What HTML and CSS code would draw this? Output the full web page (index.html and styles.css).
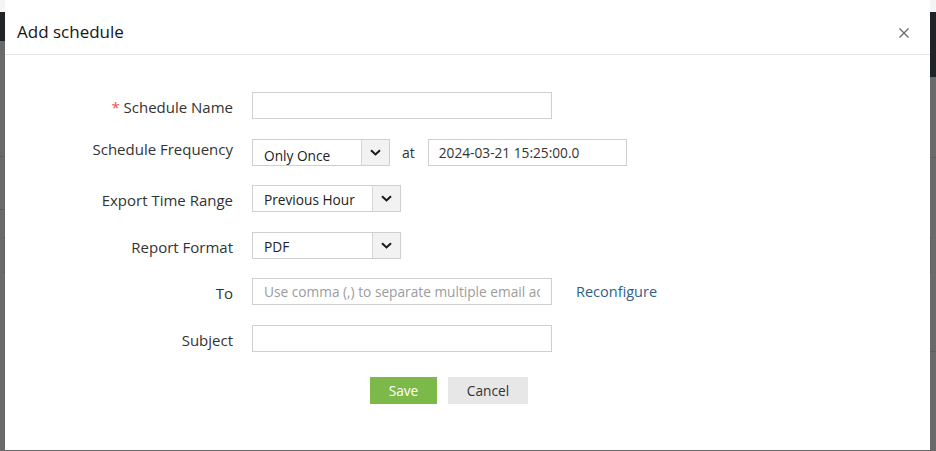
FILE: index.html
```html
<!DOCTYPE html>
<html lang="en">
<head>
<meta charset="utf-8">
<title>Add schedule</title>
<link rel="stylesheet" href="styles.css">
</head>
<body>
<div class="page">
  <div class="side side-left">
    <div class="side-top"></div>
    <div class="side-bar side-bar-left"></div>
    <div class="side-rest">
      <span class="mark mark-l1"></span>
      <span class="mark mark-l2"></span>
      <span class="mark-dots mark-l3"></span>
    </div>
  </div>

  <div class="modal">
    <header class="modal-head">
      <h1 class="modal-title">Add schedule</h1>
      <button class="close" type="button" aria-label="Close">
        <svg width="10" height="10" viewBox="0 0 10 10"><path d="M0.5 0.5 L9.5 9.5 M9.5 0.5 L0.5 9.5" stroke="#6f6f6f" stroke-width="1.4" fill="none"/></svg>
      </button>
    </header>

    <form class="form">
      <div class="row">
        <label class="label"><span class="req">*</span> Schedule Name</label>
        <div class="field"><input class="input" type="text"></div>
      </div>

      <div class="row">
        <label class="label label-up">Schedule Frequency</label>
        <div class="field">
          <div class="select select-short">
            <span class="select-text select-text-low">Only Once</span>
            <span class="select-arrow"><svg width="11" height="7" viewBox="0 0 11 7"><path d="M1 1.2 L5.5 5.4 L10 1.2" stroke="#1a1a1a" stroke-width="2.1" fill="none"/></svg></span>
          </div>
          <span class="at">at</span>
          <input class="input input-date" type="text" value="2024-03-21 15:25:00.0">
        </div>
      </div>

      <div class="row">
        <label class="label">Export Time Range</label>
        <div class="field">
          <div class="select">
            <span class="select-text">Previous Hour</span>
            <span class="select-arrow"><svg width="11" height="7" viewBox="0 0 11 7"><path d="M1 1.2 L5.5 5.4 L10 1.2" stroke="#1a1a1a" stroke-width="2.1" fill="none"/></svg></span>
          </div>
        </div>
      </div>

      <div class="row">
        <label class="label">Report Format</label>
        <div class="field">
          <div class="select">
            <span class="select-text">PDF</span>
            <span class="select-arrow"><svg width="11" height="7" viewBox="0 0 11 7"><path d="M1 1.2 L5.5 5.4 L10 1.2" stroke="#1a1a1a" stroke-width="2.1" fill="none"/></svg></span>
          </div>
        </div>
      </div>

      <div class="row">
        <label class="label">To</label>
        <div class="field">
          <input class="input" type="text" placeholder="Use comma (,) to separate multiple email addresses">
          <a class="link" href="#">Reconfigure</a>
        </div>
      </div>

      <div class="row">
        <label class="label">Subject</label>
        <div class="field"><input class="input" type="text"></div>
      </div>

      <div class="actions">
        <button class="btn btn-save" type="button">Save</button>
        <button class="btn btn-cancel" type="button">Cancel</button>
      </div>
    </form>
  </div>

  <div class="side side-right">
    <div class="side-top"></div>
    <div class="side-bar side-bar-right"></div>
    <div class="side-rest">
      <span class="mark mark-r1"></span>
      <span class="mark-dots mark-r2"></span>
      <span class="mark mark-r3"></span>
    </div>
  </div>
</div>
</body>
</html>
```

FILE: styles.css
```css
* { box-sizing: border-box; }

html, body {
  margin: 0;
  padding: 0;
  background: #6a6a6a;
  font-family: "Open Sans", "Noto Sans", sans-serif;
  color: #333;
}

.page {
  display: flex;
  width: 936px;
  height: 451px;
  overflow: hidden;
  background: #6a6a6a;
}

/* background page strips */
.side {
  display: flex;
  flex-direction: column;
  flex: none;
}
.side-left { width: 5px; }
.side-right { width: 6px; }
.side-top { height: 12px; background: #f4f4f4; }
.side-bar { background: #1f2427; }
.side-bar-left { height: 29px; }
.side-bar-right { height: 65px; }
.side-rest {
  flex: 1;
  background: #6a6a6a;
  display: flex;
  flex-direction: column;
}
.mark { display: block; height: 1px; background: #5c5c5c; }
.mark-dots { display: block; width: 1px; border-left: 1px dotted #555; }
.mark-l1 { margin-top: 115px; }
.mark-l2 { margin-top: 52px; }
.mark-l3 { margin-top: 27px; height: 36px; align-self: flex-end; }
.mark-r1 { margin-top: 80px; }
.mark-r2 { margin-top: 79px; height: 36px; }
.mark-r3 { margin-top: 78px; }

/* modal */
.modal {
  flex: none;
  width: 925px;
  height: 450px;
  background: #fff;
  display: flex;
  flex-direction: column;
}

.modal-head {
  display: flex;
  align-items: flex-start;
  height: 55px;
  padding: 20px 21px 0 12px;
  border-bottom: 1px solid #e4e4e4;
}

.modal-title {
  margin: 0;
  font-size: 17px;
  font-weight: 400;
  line-height: 23px;
  color: #161616;
}

.close {
  margin-left: auto;
  margin-top: 8px;
  padding: 0;
  border: 0;
  background: none;
  width: 10px;
  height: 10px;
  display: flex;
}

.form {
  display: flex;
  flex-direction: column;
  gap: 19.6px;
  padding-top: 37px;
}

.row {
  display: flex;
  align-items: flex-start;
  gap: 19px;
  height: 27px;
}

.label {
  flex: none;
  width: 228px;
  text-align: right;
  font-size: 15px;
  line-height: 27px;
  padding-top: 2px;
  color: #333;
}
.label-up { padding-top: 0; margin-top: -3px; }

.req { color: #e8505b; }

.field {
  display: flex;
  align-items: center;
  height: 27px;
}

.input {
  width: 300px;
  height: 27px;
  border: 1px solid #cfcfcf;
  padding: 0 11px;
  font-family: "Open Sans", "Noto Sans", sans-serif;
  font-size: 13.7px;
  color: #333;
  background: #fff;
  outline: none;
}
.input::placeholder { color: #9c9c9c; }

.input-date { width: 199px; padding-left: 10px; }

.select {
  display: flex;
  width: 149px;
  height: 27px;
  border: 1px solid #cfcfcf;
  background: #fff;
}
.select-short { width: 138px; }

.select-text {
  flex: 1;
  padding-left: 11px;
  font-size: 13.7px;
  line-height: 27px;
  color: #222;
}
.select-text-low { padding-top: 2px; }

.select-arrow {
  flex: none;
  width: 28px;
  border-left: 1px solid #d6d6d6;
  background: #f2f2f2;
  display: flex;
  align-items: center;
  justify-content: center;
}

.at {
  margin: 0 13px 0 12px;
  font-size: 14px;
  color: #333;
}

.link {
  margin-left: 24px;
  font-size: 14.5px;
  color: #2f5e8c;
  text-decoration: none;
}

.actions {
  display: flex;
  gap: 11px;
  padding-left: 365px;
  margin-top: 5.4px;
}

.btn {
  height: 27px;
  border: 0;
  padding: 0;
  font-family: "Open Sans", "Noto Sans", sans-serif;
  font-size: 13.7px;
}
.btn-save { width: 67px; background: #7cb948; color: #fff; }
.btn-cancel { width: 80px; background: #e7e7e7; color: #333; }
```
